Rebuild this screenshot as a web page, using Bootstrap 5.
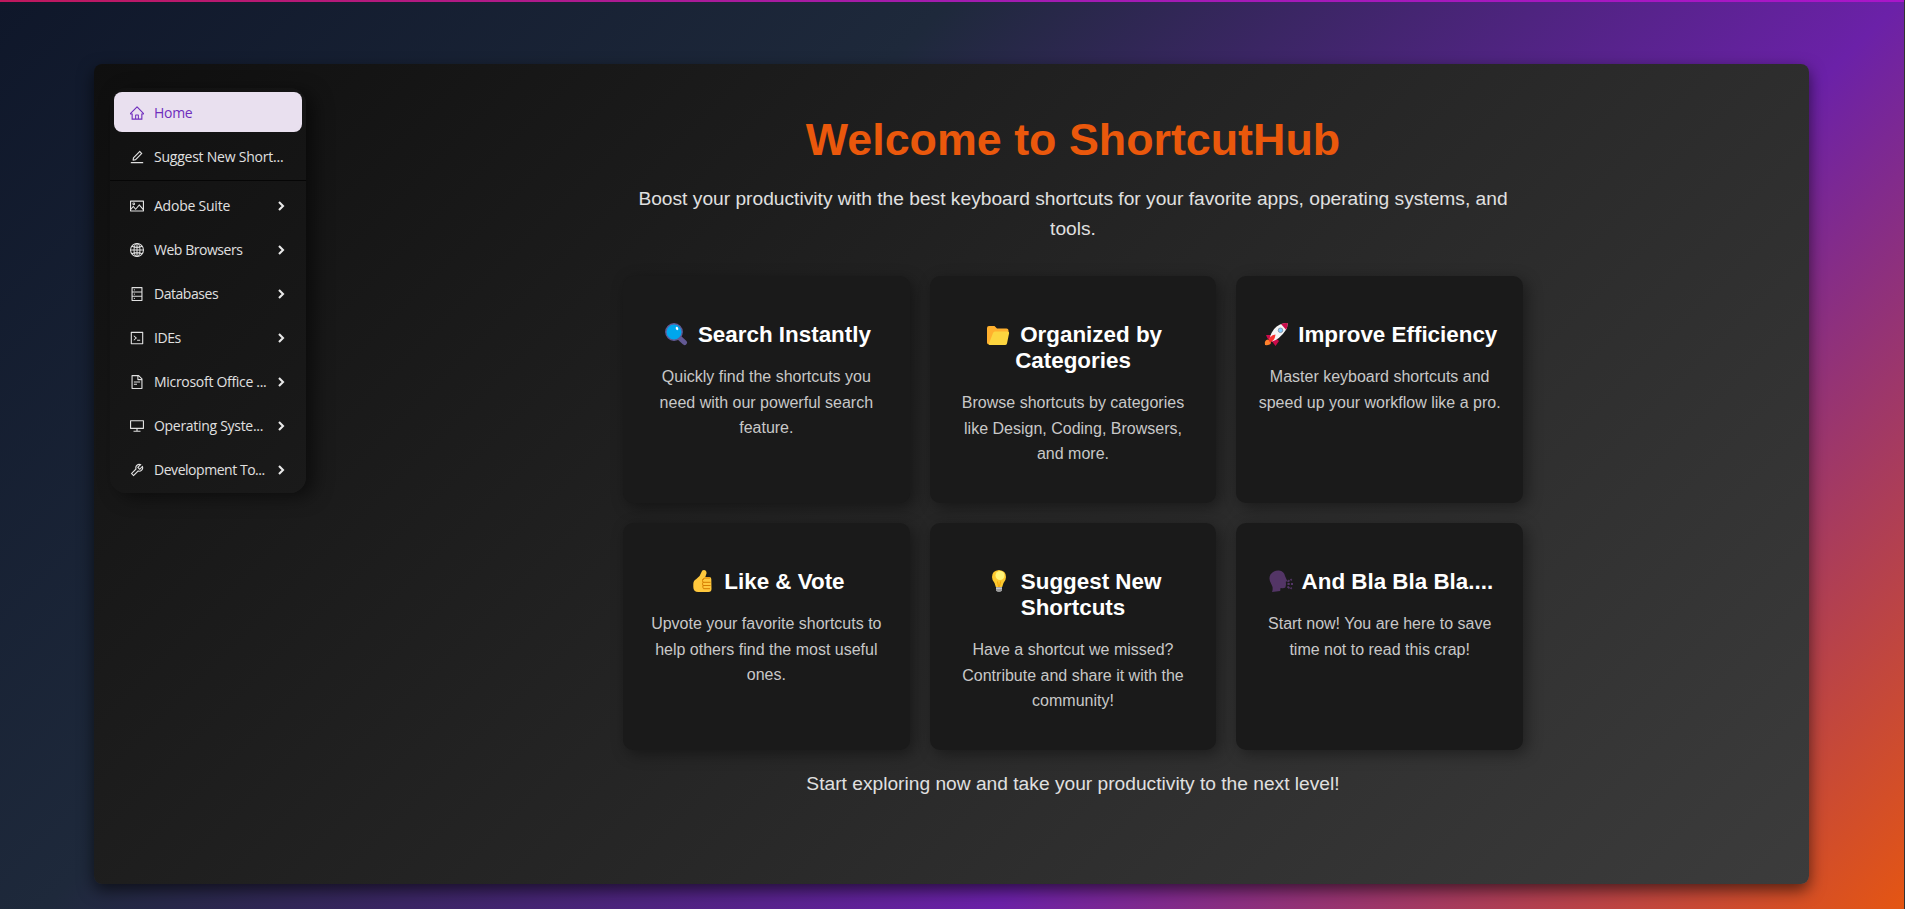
<!DOCTYPE html>
<html lang="en">
<head>
<meta charset="utf-8">
<meta name="viewport" content="width=device-width, initial-scale=1">
<title>ShortcutHub</title>
<link href="https://cdn.jsdelivr.net/npm/bootstrap@5.3.0/dist/css/bootstrap.min.css" rel="stylesheet">
<style>
html,body{height:100%}
body{background:linear-gradient(135deg,#0f172a,#1e293b,#6b21a8,#ea580c) 0 0/100% 948px no-repeat;font-family:"Liberation Sans",Arial,sans-serif;overflow:hidden;border-right:1px solid #333}
.topline{height:2px;background:linear-gradient(90deg,#be185d,#a21caf 50%,#a916c9)}
.panel{width:1715px;height:820px;margin:62px 0 0 94px;border-radius:8px;background:linear-gradient(135deg,#0f0f0f,#3c3c3c);box-shadow:0 6px 16px rgba(0,0,0,.6)}
.side{width:196px;height:405px;margin:24px 0 0 16px;border-radius:16px;padding:4px 0;background:linear-gradient(135deg,#111,#1a1a1a);box-shadow:8px 4px 18px rgba(0,0,0,.5)}
.item{height:40px;flex:none;margin:0 4px 4px;padding:1px 17px 0 16px;border-radius:8px;font:14px "Open Sans","Segoe UI",sans-serif;letter-spacing:-.3px;color:#e0e0e0;text-decoration:none}
.item.tight{letter-spacing:-.46px}
.item.loose{letter-spacing:-.23px}
.item .ico{width:14px;height:14px;margin-right:10px;fill:currentColor;flex:none}
.item .chev{width:7px;height:10px;fill:none;stroke:#e8e8e8;stroke-width:2.1}
.item.active{background:#e9e0ef;color:#6f2dbd}
.rule{height:1px;flex:none;background:#060606;margin:0 0 4px}
.content{width:900px;margin-left:317px;padding-top:46px}
h1{font-size:44.8px;font-weight:700;line-height:58px;color:#ea580c;margin:0 0 15.600px}
.intro{font-size:19.2px;line-height:30.7px;color:#e0e0e0}
.tiles{gap:20px;margin-top:31px;display:grid;grid-template-columns:repeat(3,1fr);grid-auto-rows:227px}
.tile{background:#1a1a1a;border-radius:10px;padding:46px 20px 0;box-shadow:4px 4px 15px rgba(0,0,0,.4)}
.tile h3{font-size:22.4px;font-weight:700;line-height:25.8px;color:#fff;margin:0 0 16.500px}
.tile p{font-size:16px;line-height:25.6px;color:#c8c8c8;margin:0}
.emo{width:30px;height:24px;vertical-align:-4px}
.closing{margin-top:18.500px}
</style>
</head>
<body>
<div class="topline"></div>
<div class="panel d-flex align-items-start">
<nav class="side d-flex flex-column">
<a class="item active d-flex align-items-center" href="#"><svg class="ico" viewBox="64 64 896 896"><path d="M946.5 505L560.1 118.8l-25.9-25.9a31.5 31.5 0 00-44.4 0L77.5 505a63.9 63.9 0 00-18.8 46c.4 35.2 29.7 63.3 64.9 63.3h42.5V940h691.8V614.3h43.4c17.1 0 33.2-6.7 45.3-18.8a63.6 63.6 0 0018.7-45.3c0-17-6.7-33.1-18.8-45.2zM568 868H456V664h112v204zm217.9-325.7V868H632V640c0-22.1-17.9-40-40-40H432c-22.1 0-40 17.9-40 40v228H238.1V542.3h-96l370-369.7 23.1 23.1L882 542.3h-96.1z"/></svg><span>Home</span></a>
<a class="item loose d-flex align-items-center" href="#"><svg class="ico" viewBox="64 64 896 896"><path d="M257.7 752c2 0 4-.2 6-.5L431.9 722c2-.4 3.9-1.3 5.3-2.8l423.9-423.9a9.96 9.96 0 000-14.1L694.9 114.9c-1.9-1.9-4.4-2.9-7.1-2.9s-5.2 1-7.1 2.9L256.8 538.8c-1.5 1.5-2.4 3.3-2.8 5.3l-29.5 168.2a33.5 33.5 0 009.4 29.8c6.6 6.4 14.9 9.9 23.8 9.9zm67.4-174.4L687.8 215l73.3 73.3-362.7 362.6-88.9 15.7 15.6-89zM880 836H144c-17.7 0-32 14.3-32 32v36c0 4.4 3.6 8 8 8h784c4.4 0 8-3.6 8-8v-36c0-17.7-14.3-32-32-32z"/></svg><span class="text-nowrap">Suggest New Short...</span></a>
<div class="rule"></div>
<a class="item loose d-flex align-items-center" href="#"><svg class="ico" viewBox="64 64 896 896"><path d="M928 160H96c-17.7 0-32 14.3-32 32v640c0 17.7 14.3 32 32 32h832c17.7 0 32-14.3 32-32V192c0-17.7-14.3-32-32-32zm-40 632H136v-39.9l138.5-164.3 150.1 178L658.1 489 888 761.6V792zm0-129.8L664.2 396.8c-3.2-3.8-9-3.8-12.2 0L424.6 666.4l-144-170.7c-3.2-3.8-9-3.8-12.2 0L136 652.7V232h752v430.2zM304 456a88 88 0 100-176 88 88 0 000 176zm0-116c15.5 0 28 12.5 28 28s-12.5 28-28 28-28-12.5-28-28 12.5-28 28-28z"/></svg><span>Adobe Suite</span><svg class="chev ms-auto" viewBox="0 0 7 10"><path d="M1 1l4 4-4 4"/></svg></a>
<a class="item tight d-flex align-items-center" href="#"><svg class="ico" viewBox="64 64 896 896"><g fill="none" stroke="currentColor" stroke-width="66"><circle cx="512" cy="512" r="415"/><ellipse cx="512" cy="512" rx="190" ry="415"/><path d="M512 97v830M97 512h830M190 270q322 150 644 0M190 754q322-150 644 0"/></g></svg><span>Web Browsers</span><svg class="chev ms-auto" viewBox="0 0 7 10"><path d="M1 1l4 4-4 4"/></svg></a>
<a class="item tight d-flex align-items-center" href="#"><svg class="ico" viewBox="64 64 896 896"><path d="M832 64H192c-17.7 0-32 14.3-32 32v832c0 17.7 14.3 32 32 32h640c17.7 0 32-14.3 32-32V96c0-17.7-14.3-32-32-32zm-600 72h560v208H232V136zm560 480H232V408h560v208zm0 272H232V680h560v208zM304 240a40 40 0 1080 0 40 40 0 10-80 0zm0 272a40 40 0 1080 0 40 40 0 10-80 0zm0 272a40 40 0 1080 0 40 40 0 10-80 0z"/></svg><span>Databases</span><svg class="chev ms-auto" viewBox="0 0 7 10"><path d="M1 1l4 4-4 4"/></svg></a>
<a class="item tight d-flex align-items-center" href="#"><svg class="ico" viewBox="64 64 896 896"><path d="M516 673c0 4.400 3.400 8 7.500 8h185c4.100 0 7.500-3.600 7.500-8v-48c0-4.400-3.400-8-7.500-8h-185c-4.100 0-7.500 3.600-7.500 8v48zm-194.900 6.100l192-161c3.800-3.200 3.800-9.100 0-12.300l-192-160.900A7.950 7.950 0 00308 351v62.700c0 2.400 1 4.600 2.900 6.100L420.700 512l-109.800 92.200a8.100 8.100 0 00-2.900 6.100V673c0 6.800 7.900 10.500 13.100 6.100zM880 112H144c-17.700 0-32 14.300-32 32v736c0 17.700 14.300 32 32 32h736c17.700 0 32-14.300 32-32V144c0-17.700-14.300-32-32-32zm-40 728H184V184h656v656z"/></svg><span>IDEs</span><svg class="chev ms-auto" viewBox="0 0 7 10"><path d="M1 1l4 4-4 4"/></svg></a>
<a class="item d-flex align-items-center" href="#"><svg class="ico" viewBox="64 64 896 896"><path d="M854.6 288.6L639.4 73.4c-6-6-14.1-9.4-22.6-9.4H192c-17.7 0-32 14.3-32 32v832c0 17.7 14.3 32 32 32h640c17.7 0 32-14.3 32-32V311.3c0-8.5-3.4-16.7-9.4-22.7zM790.2 326H602V137.8L790.2 326zm1.8 562H232V136h302v216a42 42 0 0042 42h216v494zM504 618H320c-4.4 0-8 3.6-8 8v48c0 4.4 3.6 8 8 8h184c4.4 0 8-3.6 8-8v-48c0-4.400-3.600-8-8-8zM312 490v48c0 4.400 3.600 8 8 8h384c4.400 0 8-3.600 8-8v-48c0-4.400-3.600-8-8-8H320c-4.400 0-8 3.600-8 8z"/></svg><span class="text-nowrap">Microsoft Office ...</span><svg class="chev ms-auto" viewBox="0 0 7 10"><path d="M1 1l4 4-4 4"/></svg></a>
<a class="item d-flex align-items-center" href="#"><svg class="ico" viewBox="64 64 896 896"><path d="M928 140H96c-17.7 0-32 14.3-32 32v496c0 17.7 14.3 32 32 32h380v112H304c-8.8 0-16 7.2-16 16v48c0 4.4 3.6 8 8 8h432c4.4 0 8-3.6 8-8v-48c0-8.8-7.2-16-16-16H548V700h380c17.7 0 32-14.3 32-32V172c0-17.7-14.3-32-32-32zm-40 488H136V212h752v416z"/></svg><span class="text-nowrap">Operating Syste...</span><svg class="chev ms-auto" viewBox="0 0 7 10"><path d="M1 1l4 4-4 4"/></svg></a>
<a class="item tight d-flex align-items-center" href="#"><svg class="ico" viewBox="64 64 896 896"><path d="M876.6 239.5c-.5-.9-1.2-1.8-2-2.5-5-5-13.1-5-18.1 0L684.2 409.3l-67.9-67.9L788.7 169c.8-.8 1.4-1.6 2-2.5 3.6-6.1 1.6-13.9-4.5-17.5-98.2-58-226.8-44.7-311.3 39.7-67 67-89.2 162-66.5 247.4l-293 293c-3 3-2.8 7.9.3 11l169.7 169.7c3.1 3.1 8.1 3.3 11 .3l292.9-292.9c85.5 22.8 180.5.7 247.6-66.4 84.4-84.5 97.7-213.1 39.7-311.3zM786 499.8c-58.1 58.1-145.3 69.3-214.6 33.6l-8.8 8.8-.1-.1-274 274.1-79.2-79.2 230.1-230.1s0 .1.1.1l52.8-52.8c-35.7-69.3-24.5-156.5 33.6-214.6a184.2 184.2 0 01144-53.5L537 318.9a32.05 32.05 0 000 45.3l124.5 124.5a32.05 32.05 0 0045.3 0l132.8-132.8c3.7 51.8-14.4 104.8-53.6 143.9z"/></svg><span class="text-nowrap">Development To...</span><svg class="chev ms-auto" viewBox="0 0 7 10"><path d="M1 1l4 4-4 4"/></svg></a>
</nav>
<main class="content text-center">
<h1>Welcome to ShortcutHub</h1>
<p class="intro mb-0 px-2">Boost your productivity with the best keyboard shortcuts for your favorite apps, operating systems, and tools.</p>
<section class="tiles">
<article class="tile"><h3><svg class="emo" viewBox="0 0 30 24"><path d="M16.500 15l6 5.500" stroke="#635994" stroke-width="5" stroke-linecap="round"/><circle cx="12" cy="10" r="8.200" fill="#00a6ed" stroke="#635994" stroke-width="1.400"/><ellipse cx="15" cy="6.500" rx="1.200" ry="1.700" fill="#fff" transform="rotate(-25 15 6.500)"/></svg> Search Instantly</h3><p>Quickly find the shortcuts you need with our powerful search feature.</p></article>
<article class="tile"><h3><svg class="emo" viewBox="0 0 30 24"><path d="M3 6q0-2 2-2h5.500l2.500 2.500h9.500q2 0 2 2V12L7 22.500H5q-2 0-2-2z" fill="#ffb02e"/><path d="M9 11q.5-1.500 2-1.500h12.500q2 0 1.600 1.800L23 21.500q-.4 1.500-2 1.500H5.500Q4.500 22.500 5 21.500z" fill="#fcd53f"/></svg> Organized by Categories</h3><p>Browse shortcuts by categories like Design, Coding, Browsers, and more.</p></article>
<article class="tile"><h3><svg class="emo" viewBox="0 0 30 24"><path d="M3 23q-1-5 3-5.500 4 1 2.500 4.500Q7 23.500 3 23z" fill="#ff822d"/><path d="M4 13h7l6 6-3.500 5-3-4-5-3.500z" fill="#ca0b4a"/><path d="M7.500 17Q10 6 18 2.500q4-1.700 7.500-1.500.4 4-2 7.500Q18 17 10 19.500z" fill="#f4f4f4"/><path d="M19 2q3-1.300 6.700-1 .2 4-1.700 6.700z" fill="#ca0b4a"/><path d="M6.500 18q2.500-5.500 7-5.500l-.5 2.500q-.5 3-5 5.500z" fill="#f8312f"/><circle cx="18.500" cy="8.300" r="2.300" fill="#83cbff" stroke="#7d8999" stroke-width=".8"/></svg> Improve Efficiency</h3><p>Master keyboard shortcuts and speed up your workflow like a pro.</p></article>
<article class="tile"><h3><svg class="emo" viewBox="0 0 30 24"><path d="M5.300 15q0-3.500 3-5Q12.500 7 13.500 3q.5-2 2.300-2 3 .3 2.700 3.500L17.300 8h4q2 0 2 2l.2 10q0 3-3 3H10.300q-5 0-5-5z" fill="#ffc83d"/><path d="M15 11q0-2 2-2h5M15 13.300h7.500M15 16.500h7.500M15.500 19.700h6.500M15 10q-1 1.500 0 3.300-1 1.500 0 3.200-.6 1.600.5 3.200" fill="none" stroke="#d67d00" stroke-width="1"/></svg> Like &amp; Vote</h3><p>Upvote your favorite shortcuts to help others find the most useful ones.</p></article>
<article class="tile"><h3><svg class="emo" viewBox="0 0 30 24"><g transform="translate(-1 0)"><path d="M12 17h6v4.500q-1 1.500-3 1.500t-3-1.500z" fill="#9b9b9b"/><path d="M12 19.300h6" stroke="#d3d3d3"/><path d="M15 1q7 .5 7 7 0 3.500-2.500 6l-1.300 4h-6.400l-1.300-4Q8 11.500 8 8q0-6.500 7-7z" fill="#fcc92f"/><circle cx="16" cy="6.500" r="4.500" fill="#fff478"/><path d="M13.500 12.500l1 5h1l1-5" fill="none" stroke="#f59f00" stroke-width=".9"/></g></svg> Suggest New Shortcuts</h3><p>Have a shortcut we missed? Contribute and share it with the community!</p></article>
<article class="tile"><h3><svg class="emo" viewBox="0 0 30 24"><path d="M6 23q1.500-4-.5-7.500Q2 10 4.500 5.500 8 1 13 1.500q5 .5 6 5.500l2 4.500q.2 1-1.200 1.200l.2 2.500-.5 3q-1 1.300-5 .8l-.3 3z" fill="#533566"/><path d="M21.500 15h2.200M21.500 17.500l2 1.800M21.500 12.700l2-1.500M25 15h2M24.500 11.300l1.300-1M24.500 18.700l1.300 1" stroke="#533566" stroke-width="1.800"/></svg> And Bla Bla Bla....</h3><p>Start now! You are here to save time not to read this crap!</p></article>
</section>
<p class="intro closing mb-0">Start exploring now and take your productivity to the next level!</p>
</main>
</div>
<script src="https://cdn.jsdelivr.net/npm/bootstrap@5.3.0/dist/js/bootstrap.bundle.min.js"></script>
</body>
</html>
